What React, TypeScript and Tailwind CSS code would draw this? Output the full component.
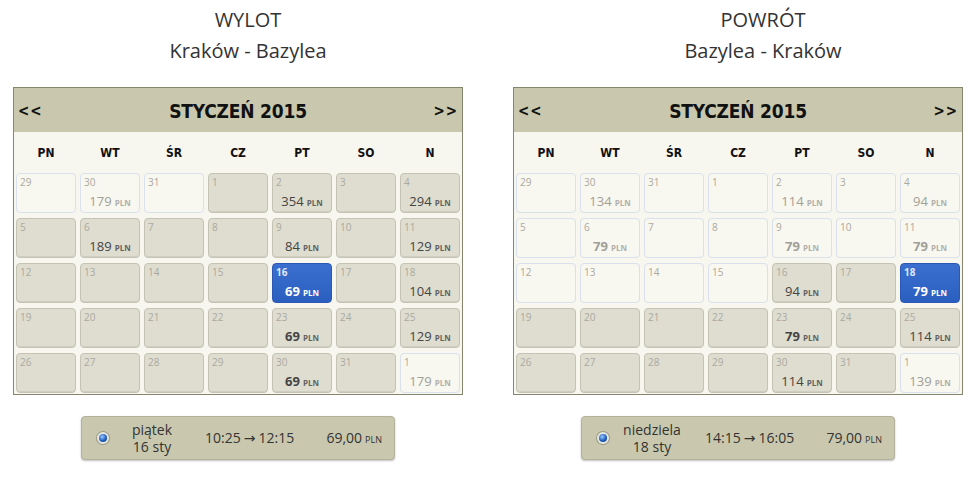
import React from "react";

type Cell = {
  day: number;
  kind: "light" | "grey" | "sel";
  price?: number;
  best?: boolean;
};

const L = (day: number, price?: number, best?: boolean): Cell => ({ day, kind: "light", price, best });
const G = (day: number, price?: number, best?: boolean): Cell => ({ day, kind: "grey", price, best });
const S = (day: number, price: number): Cell => ({ day, kind: "sel", price, best: true });

const outbound: Cell[] = [
  L(29), L(30, 179), L(31), G(1), G(2, 354), G(3), G(4, 294),
  G(5), G(6, 189), G(7), G(8), G(9, 84), G(10), G(11, 129),
  G(12), G(13), G(14), G(15), S(16, 69), G(17), G(18, 104),
  G(19), G(20), G(21), G(22), G(23, 69, true), G(24), G(25, 129),
  G(26), G(27), G(28), G(29), G(30, 69, true), G(31), L(1, 179),
];

const inbound: Cell[] = [
  L(29), L(30, 134), L(31), L(1), L(2, 114), L(3), L(4, 94),
  L(5), L(6, 79, true), L(7), L(8), L(9, 79, true), L(10), L(11, 79, true),
  L(12), L(13), L(14), L(15), G(16, 94), G(17), S(18, 79),
  G(19), G(20), G(21), G(22), G(23, 79, true), G(24), G(25, 114),
  G(26), G(27), G(28), G(29), G(30, 114), G(31), L(1, 139),
];

const weekdays = ["PN", "WT", "ŚR", "CZ", "PT", "SO", "N"];

const condensed = "font-['DejaVu_Sans_Condensed','DejaVu_Sans',sans-serif] font-stretch-condensed font-bold";

function DayCell({ c }: { c: Cell }) {
  const box =
    c.kind === "sel"
      ? "bg-[linear-gradient(#3a6fd0,#2b5fbf)] border-[#2a58b4]"
      : c.kind === "grey"
        ? "bg-[#deddd0] border-[#c4c3b4] shadow-[inset_0_-1px_0_#cfcec0]"
        : "bg-[#f8f7f0] border-[#d8e1ec]";
  const dayColor = c.kind === "sel" ? "text-[#dfe8fb] font-bold" : "text-[#aaa9a0]";
  let priceColor = "text-[#444]";
  if (c.kind === "sel") priceColor = "text-white";
  else if (c.kind === "light") priceColor = "text-[#a09f98]";
  return (
    <div className={`h-[40px] rounded-[4px] border ${box} flex flex-col px-[3px] pt-[2px]`}>
      <div className={`text-[10px] leading-[12px] ${dayColor}`}>{c.day}</div>
      {c.price !== undefined && (
        <div className={`mt-[4px] text-center leading-[16px] ${priceColor}`}>
          <span className={`text-[13px] ${c.best ? "font-bold" : ""}`}>{c.price}</span>
          <span className={`ml-[3px] text-[8px] font-bold ${c.kind === "sel" ? "text-white" : "opacity-80"}`}>PLN</span>
        </div>
      )}
    </div>
  );
}

function Calendar({ cells }: { cells: Cell[] }) {
  return (
    <div className="w-[450px] border border-[#86866f] bg-[#f7f6ef]">
      <div className={`flex h-[44px] items-center justify-between bg-[#c9c8ae] px-[4px] pt-[2px] text-[#111] ${condensed}`}>
        <span className="text-[15px] tracking-[1px]">&lt;&lt;</span>
        <span className="text-[19px] tracking-[-0.2px]">STYCZEŃ 2015</span>
        <span className="text-[15px] tracking-[1px]">&gt;&gt;</span>
      </div>
      <div className={`grid h-[41px] grid-cols-7 items-center gap-x-[4px] px-[2px] text-[12px] text-[#111] ${condensed}`}>
        {weekdays.map((w) => (
          <div key={w} className="text-center">{w}</div>
        ))}
      </div>
      <div className="grid grid-cols-7 gap-x-[4px] gap-y-[5px] px-[2px] pb-[1px]">
        {cells.map((c, i) => (
          <DayCell key={i} c={c} />
        ))}
      </div>
    </div>
  );
}

function Summary({ day, date, times, price }: { day: string; date: string; times: [string, string]; price: string }) {
  return (
    <div className="flex h-[44px] w-[314px] items-center rounded-[4px] border border-[#b3b29a] bg-[#c9c8ae] text-[14px] text-[#333] shadow-[0_1px_2px_rgba(0,0,0,0.25)]">
      <div className="ml-[15px] flex h-[12px] w-[12px] shrink-0 items-center justify-center rounded-full bg-[#e8e8e0] shadow-[0_0_0_1px_#9a9a88]">
        <div className="h-[8px] w-[8px] rounded-full bg-[radial-gradient(circle_at_40%_35%,#9cc8ff,#1d5fbf_55%,#0b2f70)]" />
      </div>
      <div className="ml-[5px] w-[76px] shrink-0 text-center leading-[17px]">
        <div>{day}</div>
        <div>{date}</div>
      </div>
      <div className="ml-[15px] leading-[17px]">
        {times[0]}
        <span className="mx-[3px] font-['DejaVu_Sans',sans-serif] text-[14px]">→</span>
        {times[1]}
      </div>
      <div className="ml-auto mr-[12px] leading-[17px]">
        {price}
        <span className="ml-[3px] text-[9px]">PLN</span>
      </div>
    </div>
  );
}

function Column({
  title,
  route,
  cells,
  titleCls,
  summary,
}: {
  title: string;
  route: string;
  cells: Cell[];
  titleCls: string;
  summary: React.ReactNode;
}) {
  return (
    <div className="flex flex-col">
      <div className={`pt-[4px] text-center text-[20px] leading-[31px] text-[#333] ${titleCls}`}>
        <div>{title}</div>
        <div>{route}</div>
      </div>
      <div className="mt-[21px] ml-[13px]">
        <Calendar cells={cells} />
      </div>
      <div className="mt-[21px] ml-[13px] flex w-[450px] justify-center">{summary}</div>
    </div>
  );
}

export default function App() {
  return (
    <div className="flex h-[480px] w-[977px] overflow-hidden bg-white font-['Open_Sans',sans-serif]">
      <div className="w-[500px]">
        <Column
          title="WYLOT"
          route="Kraków - Bazylea"
          cells={outbound}
          titleCls="w-[496px]"
          summary={<Summary day="piątek" date="16 sty" times={["10:25", "12:15"]} price="69,00" />}
        />
      </div>
      <div className="w-[477px]">
        <Column
          title="POWRÓT"
          route="Bazylea - Kraków"
          cells={inbound}
          titleCls="w-[477px] pl-[49px]"
          summary={<Summary day="niedziela" date="18 sty" times={["14:15", "16:05"]} price="79,00" />}
        />
      </div>
    </div>
  );
}
